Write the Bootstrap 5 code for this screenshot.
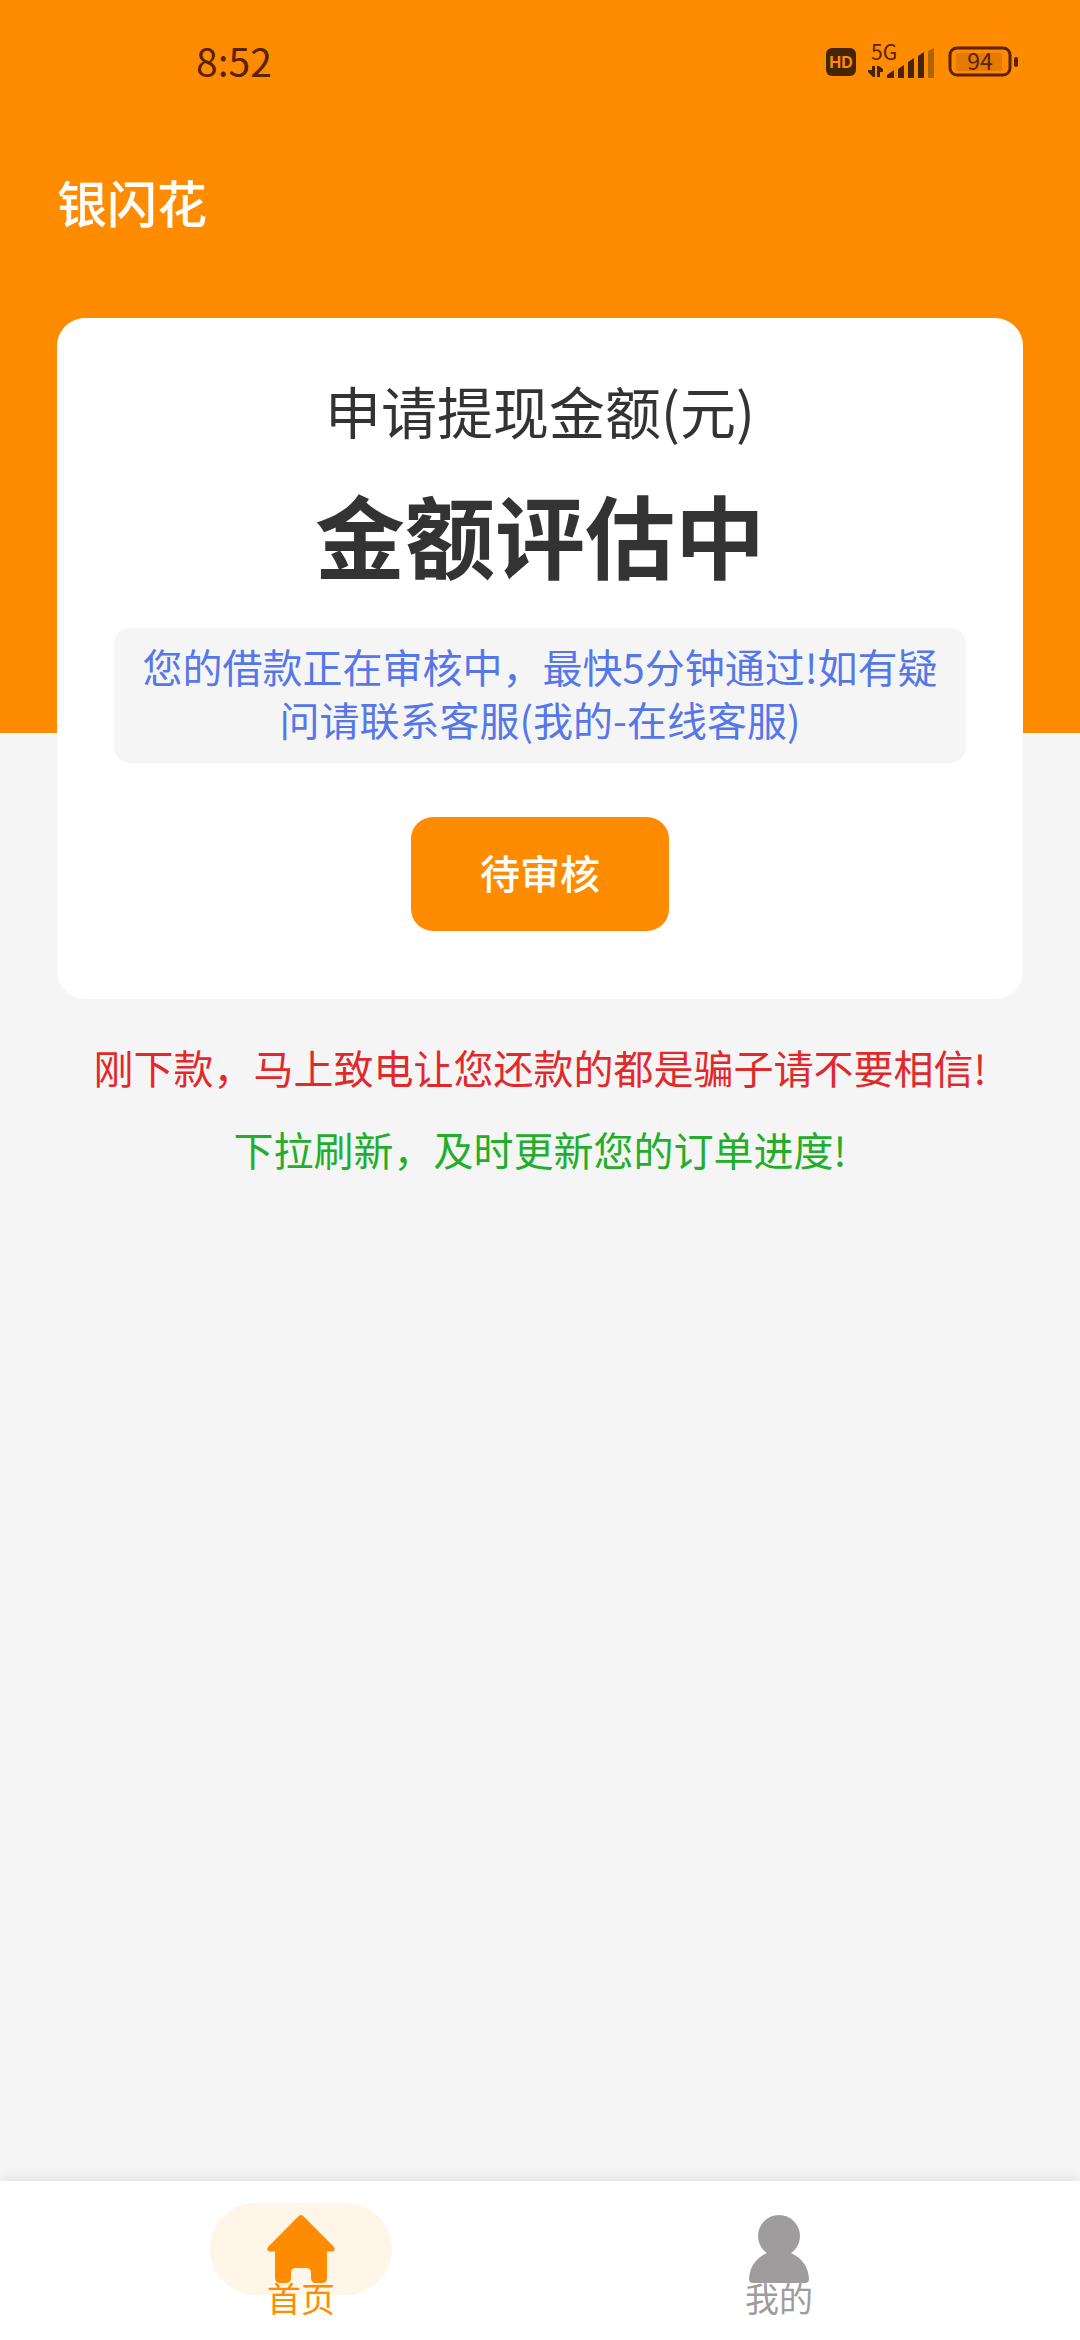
<!DOCTYPE html>
<html lang="zh-CN">
<head>
<meta charset="utf-8">
<meta name="viewport" content="width=device-width, initial-scale=1">
<title>银闪花</title>
<link href="https://cdn.jsdelivr.net/npm/bootstrap@5.3.0/dist/css/bootstrap.min.css" rel="stylesheet">
<style>
:root { --brand: #ff8c00; --ink: #333; --page: #f5f5f5; --status: #5a2200; }
body { background: var(--page); color: var(--ink); font-family: "Noto Sans CJK SC", sans-serif; font-size: 40px; line-height: 53px; }
.hero { background: var(--brand); padding-bottom: 480px; }
.status-bar { height: 124px; padding: 0 60px 0 196px; color: var(--status); }
.clock { font-size: 39px; line-height: 52px; padding-bottom: 4px; }
.app-title { color: #fff; font-size: 50px; line-height: 66px; font-weight: 500; padding: 0 57px; margin-top: 44px; height: 85px; }
.content { margin-top: -415px; padding: 0 57px; }
.loan { border-radius: 28px; padding: 59px 57px 68px; }
.loan-label { font-size: 56px; line-height: 66px; margin-bottom: 37px; font-weight: 400; }
.loan-value { font-size: 90px; line-height: 106px; margin-bottom: 42px; font-weight: 700; }
.notice { background: var(--page); color: #5677e8; border-radius: 16px; padding: 12px 24px 17px; margin-bottom: 54px; }
.btn-review { --bs-btn-bg: var(--brand); --bs-btn-color: #fff; --bs-btn-hover-bg: #f08300; --bs-btn-hover-color: #fff; font-size: 40px; line-height: 54px; font-weight: 500; border: 0; border-radius: 22px; padding: 28px 69px 32px; }
.tip { margin: 0; line-height: 54px; }
.tips { padding-top: 41px; gap: 28px; }
.tip-warn { color: #e1292b; }
.tip-refresh { color: #22ae2a; }
.tabbar { background: #fff; padding: 22px 62px 21px; box-shadow: 0 -2px 12px rgba(0,0,0,.09); }
.tab-link { color: #9e9c9d; font-size: 34px; line-height: 42px; text-decoration: none; }
.tab-link.active { color: var(--brand); }
.tab-icon { width: 182px; height: 92px; border-radius: 46px; padding-top: 12px; margin-bottom: -18px; }
.active .tab-icon { background: #fff5e8; }
.tab-text { position: relative; }
</style>
</head>
<body class="d-flex flex-column min-vh-100">
<header class="hero">
  <div class="status-bar d-flex align-items-center justify-content-between">
    <span class="clock">8:52</span>
    <svg width="200" height="64" viewBox="0 -10 200 64" role="img" aria-label="HD 5G 94" font-family="Noto Sans CJK SC, sans-serif">
      <rect x="6" y="8" width="30" height="28" rx="6" fill="#452500"/>
      <text x="21" y="28" font-family="Inter, sans-serif" font-weight="700" font-size="16" text-anchor="middle" fill="#ff8c00">HD</text>
      <text x="51" y="20" font-size="21" fill="#5a2200">5G</text>
      <g fill="#452500">
        <path d="M52 26h3v11h-2l-5-5v-2h4z"/><path d="M57 37h3v-5h3v-3l-4-3h-2z"/>
        <path d="M67 35l7-5v8h-7zM78 29l6-4v13h-6zM88 22l6-4v20h-6zM98 16l6-4v26h-6z"/>
      </g>
      <path d="M108 11l6-3v30h-6z" fill="#b36200"/>
      <rect x="136" y="13" width="46" height="18" rx="2" fill="#e57a00"/>
      <rect x="130" y="8" width="60" height="27" rx="7" fill="none" stroke="#5a2200" stroke-width="3"/>
      <rect x="194" y="17" width="4" height="10" rx="2" fill="#5a2200"/>
      <text x="160" y="30" font-size="23" text-anchor="middle" fill="#5a2200">94</text>
    </svg>
  </div>
  <h1 class="app-title mb-0">银闪花</h1>
</header>
<main class="content">
  <section class="card loan border-0 text-center align-items-center">
    <h2 class="loan-label">申请提现金额(元)</h2>
    <p class="loan-value">金额评估中</p>
    <p class="notice w-100">您的借款正在审核中，最快5分钟通过!如有疑问请联系客服(我的-在线客服)</p>
    <button type="button" class="btn btn-review">待审核</button>
  </section>
  <div class="tips d-flex flex-column text-center">
    <p class="tip tip-warn">刚下款，马上致电让您还款的都是骗子请不要相信!</p>
    <p class="tip tip-refresh">下拉刷新，及时更新您的订单进度!</p>
  </div>
</main>
<nav class="tabbar sticky-bottom d-flex mt-auto" aria-label="主导航">
  <a href="#home" class="tab-link active d-flex flex-column align-items-center flex-fill w-50" aria-current="page">
    <span class="tab-icon d-flex justify-content-center">
      <svg width="68" height="68" viewBox="0 0 68 68" fill="currentColor" aria-hidden="true"><path d="M31.500 1.200Q34-1 36.500 1.200L67 32Q69 35 66 36.500H60V63Q60 68 55 68H49Q44 68 44 63V58Q44 53 39 53H29Q24 53 24 58V63Q24 68 19 68H13Q8 68 8 63V36.500H2Q-1 35 1 32Z"/></svg>
    </span>
    <span class="tab-text">首页</span>
  </a>
  <a href="#mine" class="tab-link d-flex flex-column align-items-center flex-fill w-50">
    <span class="tab-icon d-flex justify-content-center">
      <svg width="60" height="68" viewBox="0 0 60 68" fill="currentColor" aria-hidden="true"><circle cx="30" cy="21" r="21"/><path d="M18 38H42Q59 46 60 64Q60 68 56 68H4Q0 68 0 64Q1 46 18 38Z"/></svg>
    </span>
    <span class="tab-text">我的</span>
  </a>
</nav>
<script src="https://cdn.jsdelivr.net/npm/bootstrap@5.3.0/dist/js/bootstrap.bundle.min.js"></script>
</body>
</html>
